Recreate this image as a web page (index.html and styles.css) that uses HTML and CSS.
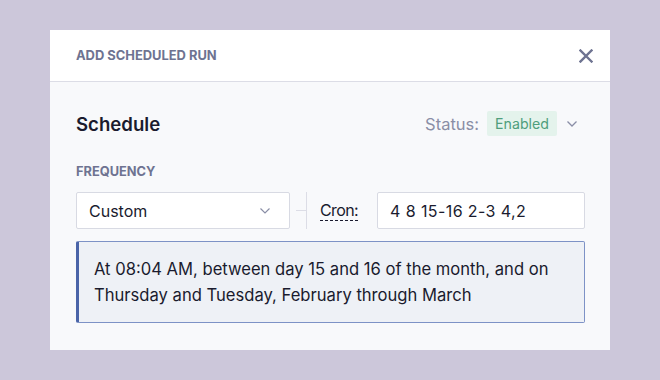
FILE: index.html
```html
<!DOCTYPE html>
<html>
<head>
    <title>Add Scheduled Run</title>
    <link rel="stylesheet" href="styles.css">
</head>
<body>
    <div class="modal">
        <div class="modal-header">
            <h3>Add Scheduled Run</h3>
            <button class="close-btn" aria-label="Close">
                <svg width="14" height="14" viewBox="0 0 14 14"><path d="M1.5 1.5l11 11M12.5 1.5l-11 11" stroke="#6e7391" stroke-width="2.4" stroke-linecap="square"/></svg>
            </button>
        </div>
        <div class="modal-body">
            <div class="schedule-row">
                <h2>Schedule</h2>
                <div class="status">
                    <span class="status-label">Status:</span>
                    <span class="badge">Enabled</span>
                    <svg class="chev" width="12" height="8" viewBox="0 0 12 8"><path d="M1.5 1.5l4.5 4.5 4.5-4.5" fill="none" stroke="#8a8ea6" stroke-width="1.3"/></svg>
                </div>
            </div>

            <div class="field-label">Frequency</div>
            <div class="freq-row">
                <div class="select">
                    <span>Custom</span>
                    <svg width="12" height="8" viewBox="0 0 12 8"><path d="M1.5 1.5l4.5 4.5 4.5-4.5" fill="none" stroke="#8a8ea6" stroke-width="1.2"/></svg>
                </div>
                <div class="connector"></div>
                <span class="cron-label">Cron:</span>
                <input type="text" class="cron-input" value="4 8 15-16 2-3 4,2">
            </div>

            <div class="description">
                At 08:04 AM, between day 15 and 16 of the month, and on Thursday and Tuesday, February through March
            </div>
        </div>
    </div>
</body>
</html>
```

FILE: styles.css
```css
body {
    margin: 0;
    background-color: #ccc7da;
    font-family: Inter, "Open Sans", sans-serif;
}
.modal {
    width: 560px;
    margin: 30px auto 0;
    background-color: #f8f9fb;
}
.modal-header {
    height: 51px;
    display: flex;
    justify-content: space-between;
    align-items: center;
    padding: 0 17px 0 26px;
    background-color: white;
    border-bottom: 1px solid #dcdde6;
}
.modal-header h3 {
    margin: 0;
    font-size: 12.9px;
    font-weight: 700;
    text-transform: uppercase;
    color: #6e7391;
}
.close-btn {
    background: none;
    border: none;
    padding: 0;
    width: 14px;
    height: 14px;
    cursor: pointer;
    display: flex;
}
.modal-body {
    padding: 29px 25px 27px 26px;
}
.schedule-row {
    display: flex;
    justify-content: space-between;
    align-items: center;
    height: 25px;
}
.schedule-row h2 {
    margin: 0;
    font-size: 18.6px;
    font-weight: 600;
    color: #1a1b2e;
}
.status {
    display: flex;
    align-items: center;
}
.status-label {
    font-size: 16.5px;
    color: #8a8ea6;
    margin-right: 8px;
}
.badge {
    background-color: #e4f3ec;
    color: #4f9e7c;
    font-size: 14.2px;
    padding: 0 8px;
    height: 25px;
    line-height: 25px;
    border-radius: 2px;
}
.chev {
    margin: 0 7px 0 9px;
}
.field-label {
    margin-top: 29px;
    font-size: 12.8px;
    font-weight: 700;
    text-transform: uppercase;
    color: #6e7391;
    line-height: 14px;
}
.freq-row {
    display: flex;
    align-items: center;
    margin-top: 13px;
    height: 37px;
}
.select {
    flex-shrink: 0;
    width: 214px;
    height: 37px;
    box-sizing: border-box;
    display: flex;
    justify-content: space-between;
    align-items: center;
    padding: 0 18px 0 12px;
    background-color: white;
    border: 1px solid #d8dae3;
    border-radius: 2px;
    font-size: 16px;
    color: #1a1b2e;
}
.connector {
    flex-shrink: 0;
    width: 10px;
    height: 37px;
    margin-left: 6px;
    border-right: 1px solid #dcdde6;
    background: linear-gradient(#dcdde6, #dcdde6) no-repeat 0 50% / 10px 1px;
}
.cron-label {
    flex-shrink: 0;
    margin-left: 13px;
    font-size: 16px;
    letter-spacing: -0.6px;
    color: #1a1b2e;
    border-bottom: 1px dashed #1a1b2e;
    line-height: 19px;
}
.cron-input {
    margin-left: 19px;
    flex: 1;
    min-width: 0;
    height: 37px;
    box-sizing: border-box;
    padding: 0 12px;
    border: 1px solid #d8dae3;
    border-radius: 2px;
    font-family: inherit;
    font-size: 16px;
    letter-spacing: 0.4px;
    color: #1a1b2e;
}
.description {
    margin-top: 12px;
    height: 82px;
    box-sizing: border-box;
    padding: 14px 16px 0 15px;
    background-color: #eef1f6;
    border: 1px solid #7d92c6;
    border-left: 3px solid #4a64a8;
    border-radius: 2px;
    font-size: 16.6px;
    line-height: 26px;
    color: #1a1b2e;
}
```
